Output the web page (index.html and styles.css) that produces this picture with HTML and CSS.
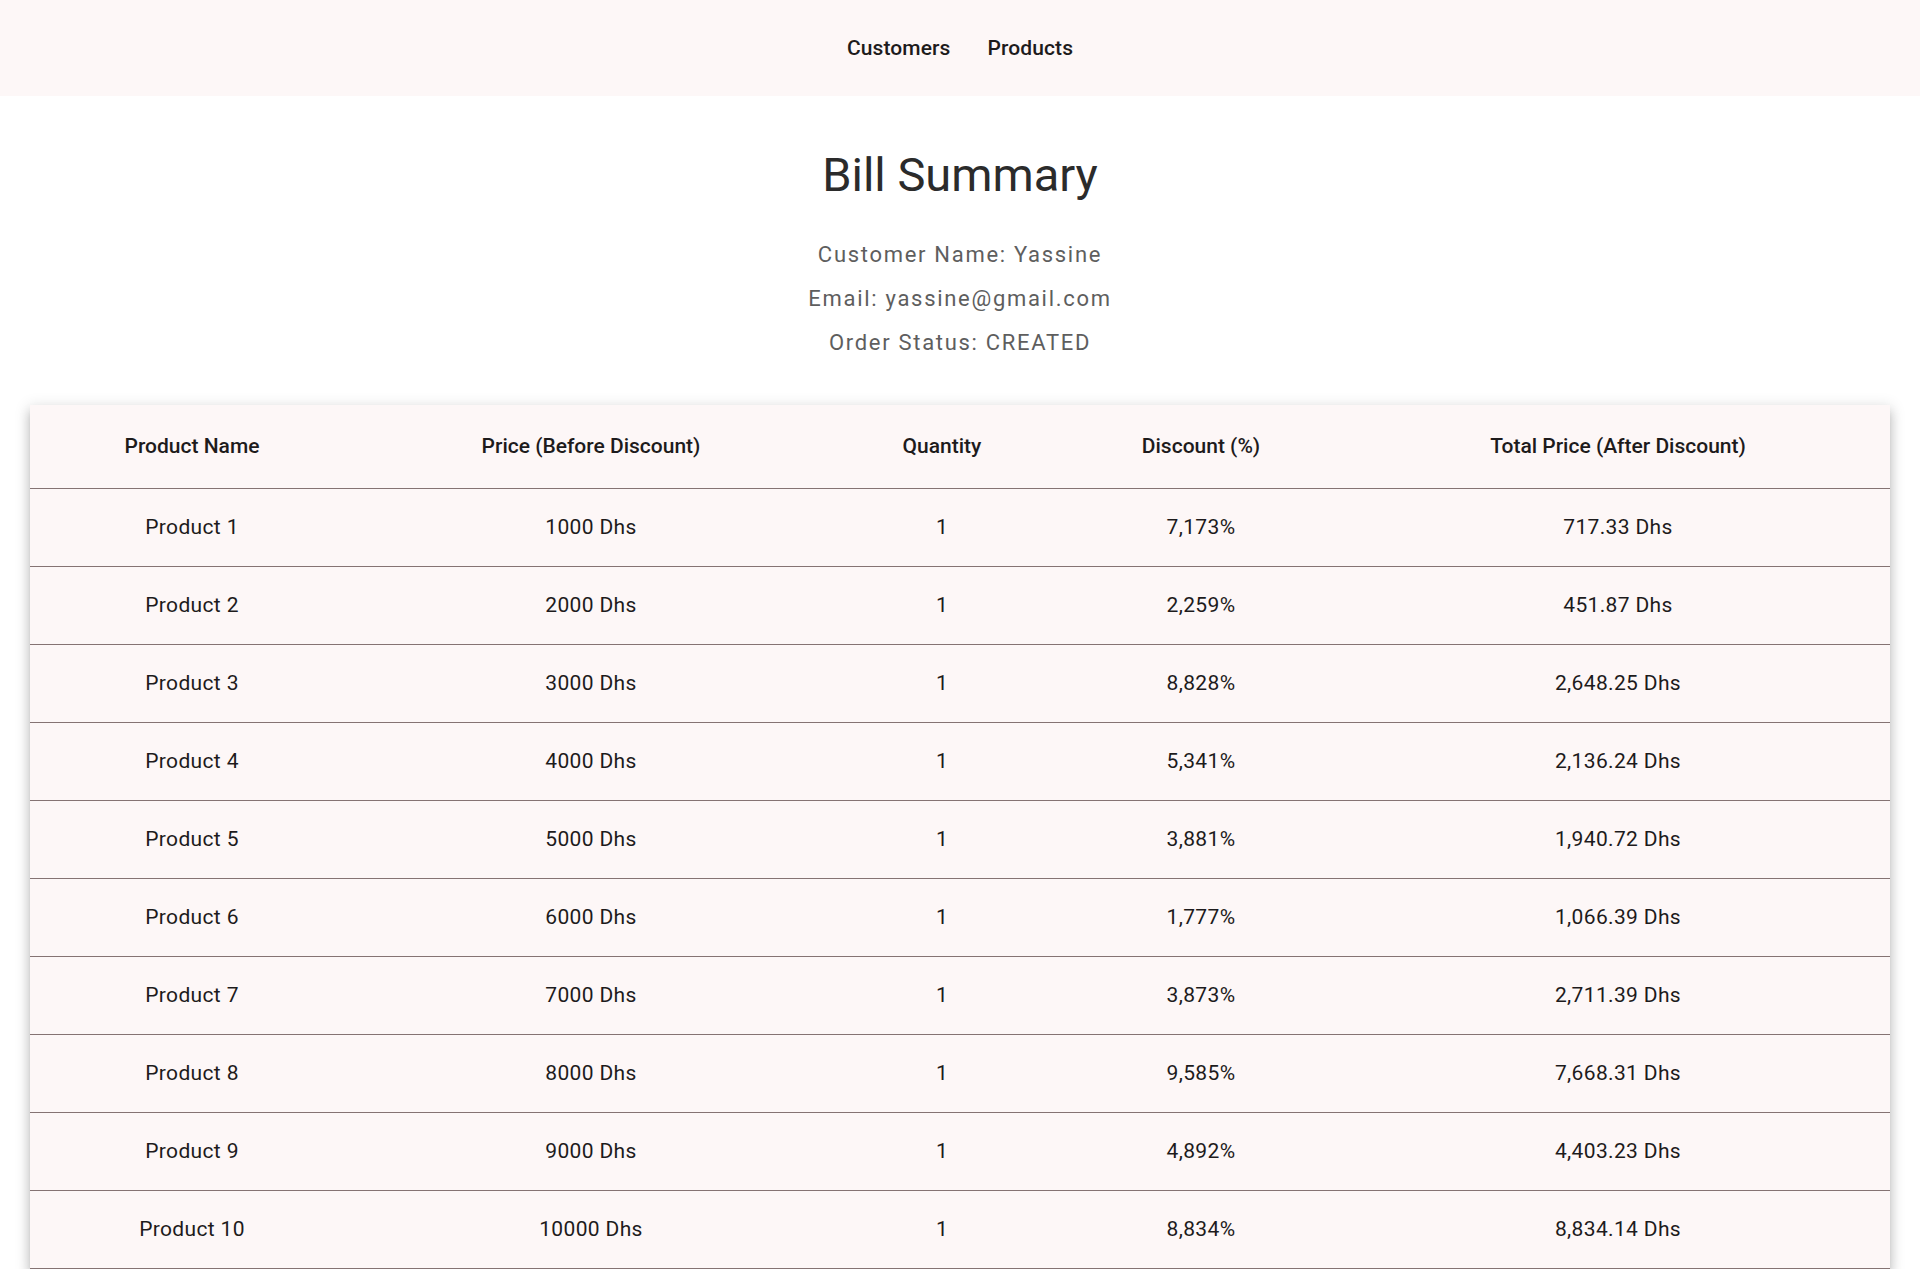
FILE: index.html
```html
<!DOCTYPE html>
<html lang="en">
<head>
<meta charset="utf-8">
<title>Bill Summary</title>
<link rel="stylesheet" href="styles.css">
</head>
<body>
<nav class="topnav">
  <a class="navlink" href="#">Customers</a>
  <a class="navlink" href="#">Products</a>
</nav>
<main class="page">
  <h1 class="title">Bill Summary</h1>
  <div class="info">
    <p class="info-line">Customer Name: Yassine</p>
    <p class="info-line">Email: yassine@gmail.com</p>
    <p class="info-line">Order Status: CREATED</p>
  </div>
  <div class="card">
    <table class="bill">
      <thead>
        <tr>
          <th class="c1">Product Name</th>
          <th class="c2">Price (Before Discount)</th>
          <th class="c3">Quantity</th>
          <th class="c4">Discount (%)</th>
          <th class="c5">Total Price (After Discount)</th>
        </tr>
      </thead>
      <tbody>
        <tr><td>Product 1</td><td>1000 Dhs</td><td>1</td><td>7,173%</td><td>717.33 Dhs</td></tr>
        <tr><td>Product 2</td><td>2000 Dhs</td><td>1</td><td>2,259%</td><td>451.87 Dhs</td></tr>
        <tr><td>Product 3</td><td>3000 Dhs</td><td>1</td><td>8,828%</td><td>2,648.25 Dhs</td></tr>
        <tr><td>Product 4</td><td>4000 Dhs</td><td>1</td><td>5,341%</td><td>2,136.24 Dhs</td></tr>
        <tr><td>Product 5</td><td>5000 Dhs</td><td>1</td><td>3,881%</td><td>1,940.72 Dhs</td></tr>
        <tr><td>Product 6</td><td>6000 Dhs</td><td>1</td><td>1,777%</td><td>1,066.39 Dhs</td></tr>
        <tr><td>Product 7</td><td>7000 Dhs</td><td>1</td><td>3,873%</td><td>2,711.39 Dhs</td></tr>
        <tr><td>Product 8</td><td>8000 Dhs</td><td>1</td><td>9,585%</td><td>7,668.31 Dhs</td></tr>
        <tr><td>Product 9</td><td>9000 Dhs</td><td>1</td><td>4,892%</td><td>4,403.23 Dhs</td></tr>
        <tr><td>Product 10</td><td>10000 Dhs</td><td>1</td><td>8,834%</td><td>8,834.14 Dhs</td></tr>
      </tbody>
    </table>
  </div>
</main>
</body>
</html>
```
FILE: styles.css
```css
* { box-sizing: border-box; }
html, body { margin: 0; padding: 0; }
body {
  font-family: Roboto, "Noto Sans", Arial, sans-serif;
  background: #ffffff;
  color: #1d1b1c;
}
.topnav {
  height: 96px;
  background: #fdf7f7;
  display: flex;
  justify-content: center;
  align-items: center;
  gap: 37px;
}
.navlink {
  font-size: 21px;
  font-weight: 500;
  color: #1d1b1c;
  text-decoration: none;
  letter-spacing: 0.1px;
}
.page {
  padding: 51px 30px 40px;
}
.title {
  margin: 0;
  text-align: center;
  font-size: 47px;
  font-weight: 400;
  line-height: 56px;
  color: #2b2b2b;
}
.info {
  margin-top: 30px;
  text-align: center;
}
.info-line {
  margin: 0;
  font-size: 22px;
  line-height: 44px;
  color: #5e5e5e;
  letter-spacing: 1.7px;
}
.card {
  margin-top: 40px;
  background: #fdf7f7;
  box-shadow: 0 5px 5px -3px rgba(0,0,0,.2), 0 8px 10px 1px rgba(0,0,0,.14), 0 3px 14px 2px rgba(0,0,0,.12);
}
.bill {
  width: 100%;
  border-collapse: collapse;
  table-layout: fixed;
}
.c1 { width: 324px; }
.c2 { width: 474px; }
.c3 { width: 228px; }
.c4 { width: 290px; }
.c5 { width: auto; }
.bill th {
  height: 83px;
  font-size: 21px;
  font-weight: 500;
  text-align: center;
  border-bottom: 1px solid #857373;
  padding: 0 16px;
  color: #1d1b1c;
}
.bill td {
  height: 78px;
  font-size: 21px;
  text-align: center;
  border-bottom: 1px solid #857373;
  padding: 0 16px;
  color: #1d1b1c;
  letter-spacing: 0.35px;
}
```
